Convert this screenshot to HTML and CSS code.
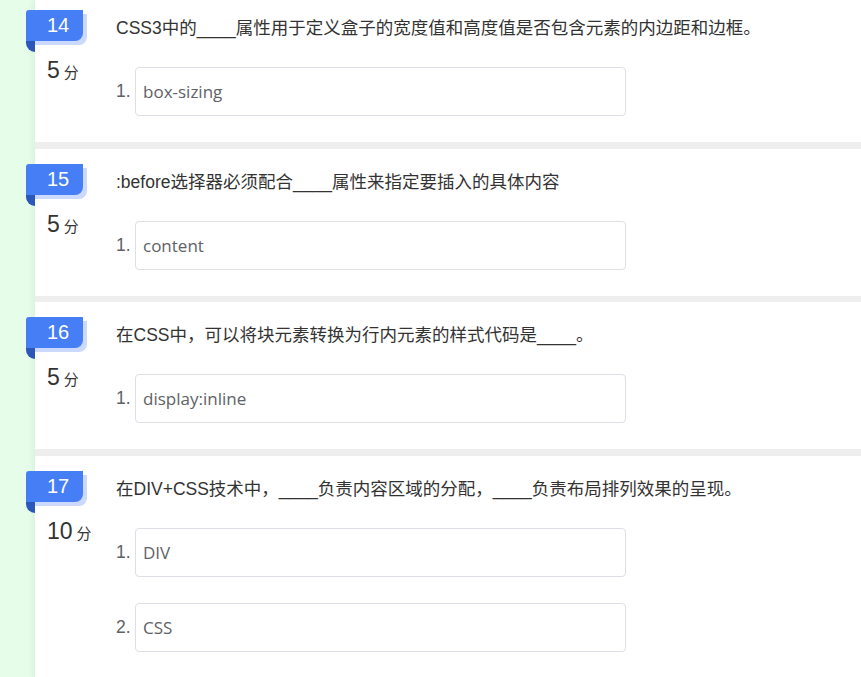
FILE: index.html
```html
<!DOCTYPE html>
<html lang="zh-CN">
<head>
<meta charset="utf-8">
<title>填空题</title>
<link rel="stylesheet" href="styles.css">
</head>
<body>
<div class="page">
  <div class="list">
    <section class="item first">
      <div class="side">
        <div class="badge"><span class="num">14</span><span class="tail"></span></div>
        <div class="score"><span class="pts">5</span><span class="unit">分</span></div>
      </div>
      <div class="main">
        <div class="question">CSS3中的____属性用于定义盒子的宽度值和高度值是否包含元素的内边距和边框。</div>
        <div class="answers">
          <div class="answer"><span class="idx">1.</span><div class="box">box-sizing</div></div>
        </div>
      </div>
    </section>
    <section class="item">
      <div class="side">
        <div class="badge"><span class="num">15</span><span class="tail"></span></div>
        <div class="score"><span class="pts">5</span><span class="unit">分</span></div>
      </div>
      <div class="main">
        <div class="question">:before选择器必须配合____属性来指定要插入的具体内容</div>
        <div class="answers">
          <div class="answer"><span class="idx">1.</span><div class="box">content</div></div>
        </div>
      </div>
    </section>
    <section class="item">
      <div class="side">
        <div class="badge"><span class="num">16</span><span class="tail"></span></div>
        <div class="score"><span class="pts">5</span><span class="unit">分</span></div>
      </div>
      <div class="main">
        <div class="question">在CSS中，可以将块元素转换为行内元素的样式代码是____。</div>
        <div class="answers">
          <div class="answer"><span class="idx">1.</span><div class="box">display:inline</div></div>
        </div>
      </div>
    </section>
    <section class="item">
      <div class="side">
        <div class="badge"><span class="num">17</span><span class="tail"></span></div>
        <div class="score"><span class="pts">10</span><span class="unit">分</span></div>
      </div>
      <div class="main">
        <div class="question">在DIV+CSS技术中，____负责内容区域的分配，____负责布局排列效果的呈现。</div>
        <div class="answers">
          <div class="answer"><span class="idx">1.</span><div class="box">DIV</div></div>
          <div class="answer"><span class="idx">2.</span><div class="box">CSS</div></div>
        </div>
      </div>
    </section>
  </div>
</div>
</body>
</html>
```
FILE: styles.css
```css
html, body {
  margin: 0;
  padding: 0;
}
body {
  background: #e6fdea;
  font-family: "Liberation Sans", "Noto Sans CJK SC", sans-serif;
  color: #333;
  overflow: hidden;
}
.page {
  margin-left: 35px;
  background: #eeeeee;
  box-shadow: -3px 0 5px rgba(0, 80, 20, 0.06);
}
.list {
  display: flex;
  flex-direction: column;
  gap: 6.5px;
}
.item {
  background: #fff;
  display: flex;
  padding: 15px 0 26px 0;
}
.item.first {
  margin-top: -5px;
}
.side {
  width: 81px;
  flex: none;
  display: flex;
  flex-direction: column;
}
.badge {
  position: relative;
  margin-left: -9px;
  width: 57px;
  height: 31px;
  background: #467ef6;
  border-radius: 3px 0 8px 0;
  box-shadow: 4px 4px 0 #cad9fc;
  color: #fff;
  font-size: 20px;
  line-height: 31px;
  display: flex;
  justify-content: center;
}
.num {
  padding-left: 7px;
}
.tail {
  position: absolute;
  left: 0;
  top: 31px;
  width: 9px;
  height: 11px;
  background: #2b57ba;
  border-radius: 0 0 0 9px;
}
.score {
  margin-top: 14px;
  padding-left: 12px;
  display: flex;
  align-items: baseline;
  gap: 4px;
  line-height: 30px;
}
.pts {
  font-size: 23px;
  color: #333;
}
.unit {
  font-size: 15px;
  color: #333;
}
.main {
  flex: 1;
  display: flex;
  flex-direction: column;
}
.question {
  font-size: 17.5px;
  line-height: 36px;
  color: #333;
  white-space: nowrap;
}
.answers {
  margin-top: 21px;
  display: flex;
  flex-direction: column;
  gap: 26px;
}
.answer {
  display: flex;
  align-items: center;
  gap: 4px;
}
.idx {
  width: 15px;
  font-size: 17.5px;
  color: #606266;
}
.box {
  width: 491px;
  height: 49px;
  box-sizing: border-box;
  border: 1px solid #dcdfe6;
  border-radius: 4px;
  padding: 0 7px;
  display: flex;
  align-items: center;
  font-family: "Open Sans", "Noto Sans CJK SC", sans-serif;
  font-size: 17px;
  color: #606266;
}
```
